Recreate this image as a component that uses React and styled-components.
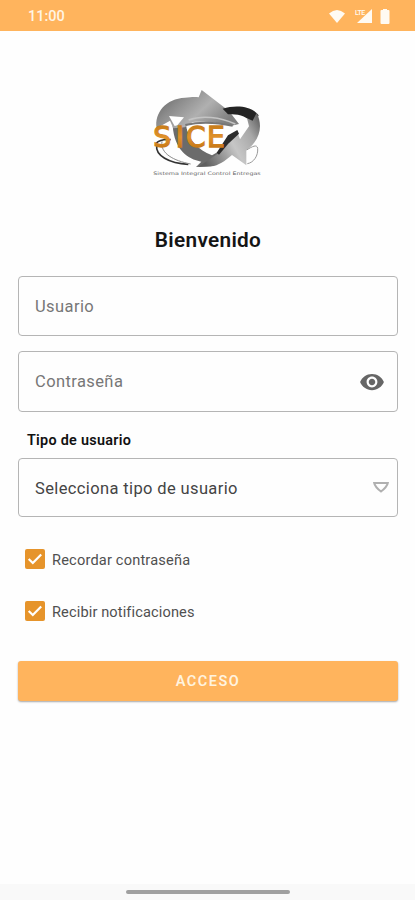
import React, { useState } from "react";
import styled, { createGlobalStyle } from "styled-components";

const Logo = () => (
  <LogoSvg viewBox="0 0 390 315">
    <defs>
      <linearGradient id="topArrow" x1="0" y1="0" x2="1" y2="0.5">
        <stop offset="0" stopColor="#5c5c5c" />
        <stop offset="0.35" stopColor="#8c8c8c" />
        <stop offset="0.65" stopColor="#b0b0b0" />
        <stop offset="1" stopColor="#808080" />
      </linearGradient>
      <linearGradient id="bottomArrow" x1="0" y1="0.7" x2="1" y2="0.2">
        <stop offset="0" stopColor="#5e5e5e" />
        <stop offset="0.5" stopColor="#c6c6c6" />
        <stop offset="0.8" stopColor="#a8a8a8" />
        <stop offset="1" stopColor="#6c6c6c" />
      </linearGradient>
      <linearGradient id="letters" x1="0" y1="0" x2="0" y2="1">
        <stop offset="0" stopColor="#bd7413" />
        <stop offset="0.5" stopColor="#e0912a" />
        <stop offset="1" stopColor="#b96a0c" />
      </linearGradient>
    </defs>
    <path
      d="M48 190Q62 176 92 179M50 196C46 226 86 250 145 253"
      fill="none"
      stroke="#333"
      strokeWidth="5"
    />
    <path
      d="M66 184C60 220 100 242 152 252"
      fill="none"
      stroke="#8a8a8a"
      strokeWidth="3"
    />
    <path
      d="M98 138L138 136C145 176 172 210 216 226L240 212L238 240L214 259L168 261L184 245C142 237 104 210 98 138Z"
      fill="#6b6b6b"
    />
    <path
      d="M50 145C42 99 78 55 135 53C153 51 166 50 176 52L185 30L267 93L297 132L275 137C245 129 195 123 158 126L134 142L100 145L90 122Z"
      fill="url(#topArrow)"
    />
    <path
      d="M146 120C185 105 240 111 286 132"
      fill="none"
      stroke="#c4c4c4"
      strokeWidth="5"
    />
    <path
      d="M136 135C180 124 235 128 278 137"
      fill="none"
      stroke="#777"
      strokeWidth="6"
    />
    <path d="M87 108L132 112L112 136L104 138Z" fill="#fff" />
    <path
      d="M140 143C175 128 220 131 262 141L248 194L216 222C176 207 148 180 140 143Z"
      fill="#fff"
    />
    <path
      d="M248 86C288 74 336 78 356 106L342 132C320 108 294 100 264 103Z"
      fill="#242424"
    />
    <path
      d="M350 98C370 138 360 181 319 211L319 256L276 225C254 244 235 257 214 259L174 261L242 215L294 161L300 178L327 139L321 115L338 122Z"
      fill="url(#bottomArrow)"
    />
    <path
      d="M320 210C337 199 351 192 353 205C355 227 341 248 322 251"
      fill="none"
      stroke="#999"
      strokeWidth="3"
    />
    <path
      d="M230 218L264 166L292 150L297 161L265 191L237 224Z"
      fill="#2c2c2c"
    />
    <LogoName x="40 107 138 201" y="200">
      SICE
    </LogoName>
    <LogoTagline
      x="40"
      y="285"
      textLength="322"
      lengthAdjust="spacingAndGlyphs"
    >
      Sistema Integral Control Entregas
    </LogoTagline>
  </LogoSvg>
);

const StatusIcons = () => (
  <StatusSvg viewBox="0 0 62 20">
    <path d="M0 5.500Q8-1.500 16 5.500L8 15Z" />
    <path d="M28 15L43 1V15Z" />
    <text x="26" y="7">
      LTE
    </text>
    <path d="M52.500 2h1.500V1h4v1h1.500q1 0 1 1v12q0 1-1 1h-7q-1 0-1-1V3q0-1 1-1Z" />
  </StatusSvg>
);

const EyeIcon = () => (
  <svg width="26" height="26" viewBox="0 0 24 24" fill="#666">
    <path d="M12 4.500C7 4.500 2.730 7.610 1 12c1.730 4.390 6 7.500 11 7.500s9.270-3.110 11-7.500c-1.730-4.390-6-7.500-11-7.500zM12 17c-2.760 0-5-2.240-5-5s2.240-5 5-5 5 2.240 5 5-2.240 5-5 5zm0-8c-1.660 0-3 1.340-3 3s1.340 3 3 3 3-1.340 3-3-1.340-3-3-3z" />
  </svg>
);

const Checkbox = ({ label, spacing }) => {
  const [checked, setChecked] = useState(true);
  return (
    <CheckRow>
      <HiddenCheck
        type="checkbox"
        checked={checked}
        onChange={() => setChecked(!checked)}
      />
      <CheckBox $checked={checked}>
        <svg width="20" height="20" viewBox="0 0 20 20">
          <path
            d="M3.700 10L7.800 14L16.200 5.500"
            fill="none"
            stroke="#fff"
            strokeWidth="2.200"
          />
        </svg>
      </CheckBox>
      <CheckLabel $spacing={spacing}>{label}</CheckLabel>
    </CheckRow>
  );
};

const App = () => {
  const [visible, setVisible] = useState(false);
  return (
    <Screen>
      <GlobalStyle />
      <StatusBar>
        <span>11:00</span>
        <StatusIcons />
      </StatusBar>
      <Content>
        <Logo />
        <Title>Bienvenido</Title>
        <Field $height={60}>
          <Input placeholder="Usuario" aria-label="Usuario" />
        </Field>
        <Field $height={61} $top={15}>
          <Input
            type={visible ? "text" : "password"}
            placeholder="Contraseña"
            aria-label="Contraseña"
          />
          <IconButton type="button" onClick={() => setVisible(!visible)}>
            <EyeIcon />
          </IconButton>
        </Field>
        <FieldLabel>Tipo de usuario</FieldLabel>
        <Field $height={59}>
          <SelectText>Selecciona tipo de usuario</SelectText>
          <Arrow viewBox="0 0 18 13">
            <path d="M2.200 2H15.800Q15 6 9 10.500Q3 6 2.200 2Z" />
          </Arrow>
        </Field>
        <Checks>
          <Checkbox label="Recordar contraseña" spacing={0.18} />
          <Checkbox label="Recibir notificaciones" spacing={0.12} />
        </Checks>
        <Submit type="button">ACCESO</Submit>
      </Content>
      <NavBar>
        <NavHandle />
      </NavBar>
    </Screen>
  );
};

export default App;

const GlobalStyle = createGlobalStyle`
  * {
    box-sizing: border-box;
  }
  body {
    margin: 0;
    background: #fefefe;
    font-family: Roboto, sans-serif;
  }
`;
const Screen = styled.div`
  display: flex;
  flex-direction: column;
  height: 900px;
  background: #fefefe;
`;
const StatusBar = styled.div`
  height: 31px;
  flex: none;
  display: flex;
  align-items: center;
  justify-content: space-between;
  padding: 1px 24px 0 28px;
  background: #ffb45d;
  color: #fff5e5;
  font-size: 14.5px;
  font-weight: 500;
`;
const StatusSvg = styled.svg`
  width: 62px;
  height: 20px;
  margin-top: 3px;
  fill: #fffaf2;

  text {
    font-size: 7px;
    font-weight: 500;
    letter-spacing: -0.5px;
  }
`;
const Content = styled.div`
  flex: 1;
  display: flex;
  flex-direction: column;
  padding: 49px 17px 0 18px;
`;
const LogoSvg = styled.svg`
  width: 130px;
  height: 105px;
  flex: none;
  margin-left: 122px;
`;
const LogoName = styled.text`
  font-family: "DejaVu Sans", sans-serif;
  font-size: 84px;
  fill: url(#letters);
  stroke: url(#letters);
  stroke-width: 4px;
`;
const LogoTagline = styled.text`
  font-family: "DejaVu Sans", sans-serif;
  font-size: 14px;
  fill: #666;
`;
const Title = styled.h1`
  margin: 42px 0 22px;
  font-size: 20.8px;
  line-height: 27px;
  font-weight: 600;
  letter-spacing: 0.3px;
  text-align: center;
  color: #151515;
`;
const Field = styled.div`
  height: ${(props) => props.$height}px;
  margin-top: ${(props) => props.$top || 0}px;
  flex: none;
  display: flex;
  align-items: center;
  padding: 0 7px 0 16px;
  border: 1px solid #b5b5b5;
  border-radius: 4px;
`;
const Input = styled.input`
  flex: 1;
  min-width: 0;
  padding: 0;
  border: none;
  outline: none;
  background: none;
  font-family: inherit;
  font-size: 16.5px;
  letter-spacing: 0.4px;
  color: #333;

  &::placeholder {
    color: #777;
    opacity: 1;
  }
`;
const IconButton = styled.button`
  display: flex;
  margin-right: 5px;
  padding: 0;
  border: none;
  background: none;
`;
const FieldLabel = styled.div`
  margin: 19px 0 8px 9px;
  font-size: 14.4px;
  line-height: 19px;
  font-weight: 600;
  letter-spacing: 0.27px;
  color: #111;
`;
const SelectText = styled.span`
  flex: 1;
  padding-top: 1px;
  font-size: 16.5px;
  letter-spacing: 0.37px;
  color: #444;
`;
const Arrow = styled.svg`
  width: 18px;
  height: 13px;
  fill: none;
  stroke: #b0b0b0;
  stroke-width: 2;
`;
const Checks = styled.div`
  display: flex;
  flex-direction: column;
  gap: 32px;
  margin: 32px 0 40px 7px;
`;
const CheckRow = styled.label`
  display: flex;
  align-items: center;
  height: 20px;
`;
const HiddenCheck = styled.input`
  display: none;
`;
const CheckBox = styled.span`
  display: flex;
  width: 20px;
  height: 20px;
  border-radius: 2px;
  background: ${(props) => (props.$checked ? "#e6942b" : "#ccc")};
`;
const CheckLabel = styled.span`
  margin-left: 7px;
  padding-top: 2px;
  font-size: 14.6px;
  letter-spacing: ${(props) => props.$spacing}px;
  color: #505050;
`;
const Submit = styled.button`
  height: 40px;
  flex: none;
  padding: 1px 0 0;
  border: none;
  border-radius: 3px;
  background: #ffb45d;
  box-shadow: 0 1px 2px rgba(0, 0, 0, 0.35);
  font-family: inherit;
  font-size: 14.5px;
  font-weight: 600;
  letter-spacing: 1.5px;
  color: #fff3df;
`;
const NavBar = styled.div`
  height: 16px;
  flex: none;
  display: flex;
  justify-content: center;
  padding-top: 6px;
  background: #f9f9f9;
`;
const NavHandle = styled.div`
  width: 164px;
  height: 4px;
  border-radius: 2px;
  background: #a0a0a0;
`;
